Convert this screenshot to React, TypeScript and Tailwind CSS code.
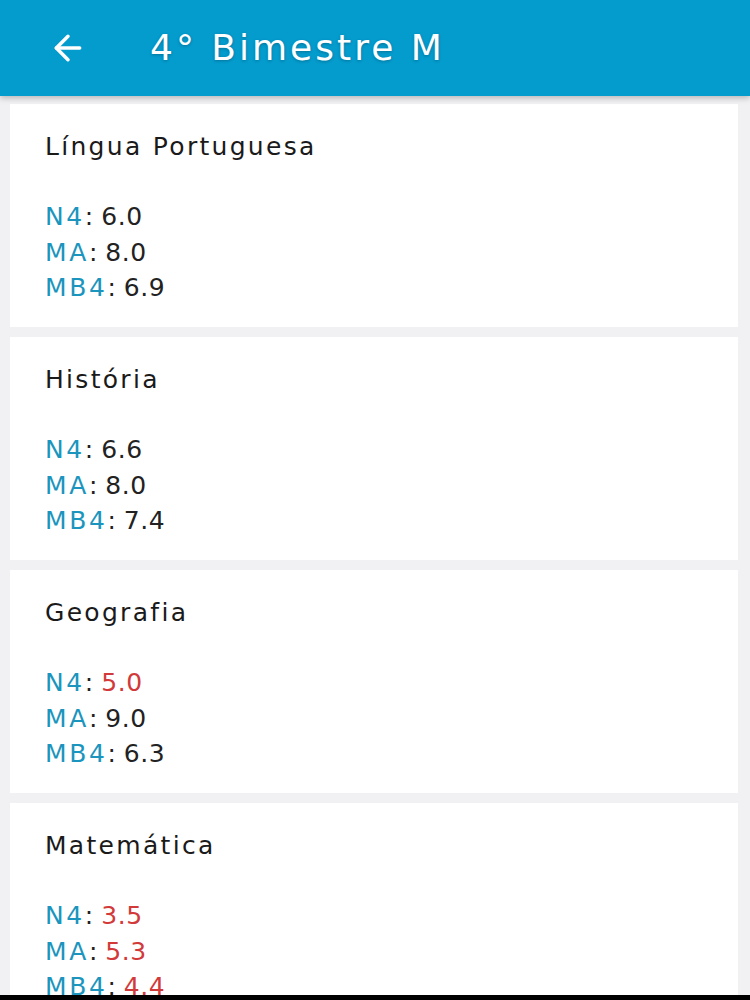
import { ArrowLeft } from "lucide-react";

type Grade = { label: string; value: string; low?: boolean };
type Subject = { name: string; grades: Grade[] };

const subjects: Subject[] = [
  {
    name: "Língua Portuguesa",
    grades: [
      { label: "N4", value: "6.0" },
      { label: "MA", value: "8.0" },
      { label: "MB4", value: "6.9" },
    ],
  },
  {
    name: "História",
    grades: [
      { label: "N4", value: "6.6" },
      { label: "MA", value: "8.0" },
      { label: "MB4", value: "7.4" },
    ],
  },
  {
    name: "Geografia",
    grades: [
      { label: "N4", value: "5.0", low: true },
      { label: "MA", value: "9.0" },
      { label: "MB4", value: "6.3" },
    ],
  },
  {
    name: "Matemática",
    grades: [
      { label: "N4", value: "3.5", low: true },
      { label: "MA", value: "5.3", low: true },
      { label: "MB4", value: "4.4", low: true },
    ],
  },
];

const SubjectCard = ({ subject }: { subject: Subject }) => (
  <div className="bg-white h-[223px] shrink-0 pl-[35px] pt-[26px]">
    <h2 className="text-[25px] leading-[34px] tracking-[2.3px] text-[#1a1a1a]">{subject.name}</h2>
    <ul className="mt-[35px]">
      {subject.grades.map((g) => (
        <li key={g.label} className="text-[25px] leading-[35.5px]">
          <span className="text-[#1b95bd] tracking-[2.6px]">{g.label}</span>
          <span className="text-[#222]">: </span>
          <span className={`tracking-[0.6px] ${g.low ? "text-[#d23a3a]" : "text-[#222]"}`}>{g.value}</span>
        </li>
      ))}
    </ul>
  </div>
);

export default function App() {
  return (
    <div
      className="w-[750px] h-[1000px] overflow-hidden bg-[#f1f1f3] flex flex-col"
      style={{ fontFamily: '"DejaVu Sans", sans-serif' }}
    >
      <header className="h-[96px] shrink-0 bg-[#049bcd] flex items-center pl-[48px] shadow-[0_2px_6px_rgba(0,0,0,0.25)] z-10">
        <ArrowLeft className="text-white w-[40px] h-[40px]" strokeWidth={2.1} />
        <h1 className="ml-[62px] text-white text-[36px] tracking-[3px] leading-none [text-shadow:0_1px_3px_rgba(0,0,0,0.25)]">
          4° Bimestre M
        </h1>
      </header>
      <main className="flex-1 min-h-0 flex flex-col gap-[10px] pt-[8px] pl-[10px] pr-[12px] overflow-hidden">
        {subjects.map((s) => (
          <SubjectCard key={s.name} subject={s} />
        ))}
      </main>
      <div className="h-[5px] shrink-0 bg-black" />
    </div>
  );
}
